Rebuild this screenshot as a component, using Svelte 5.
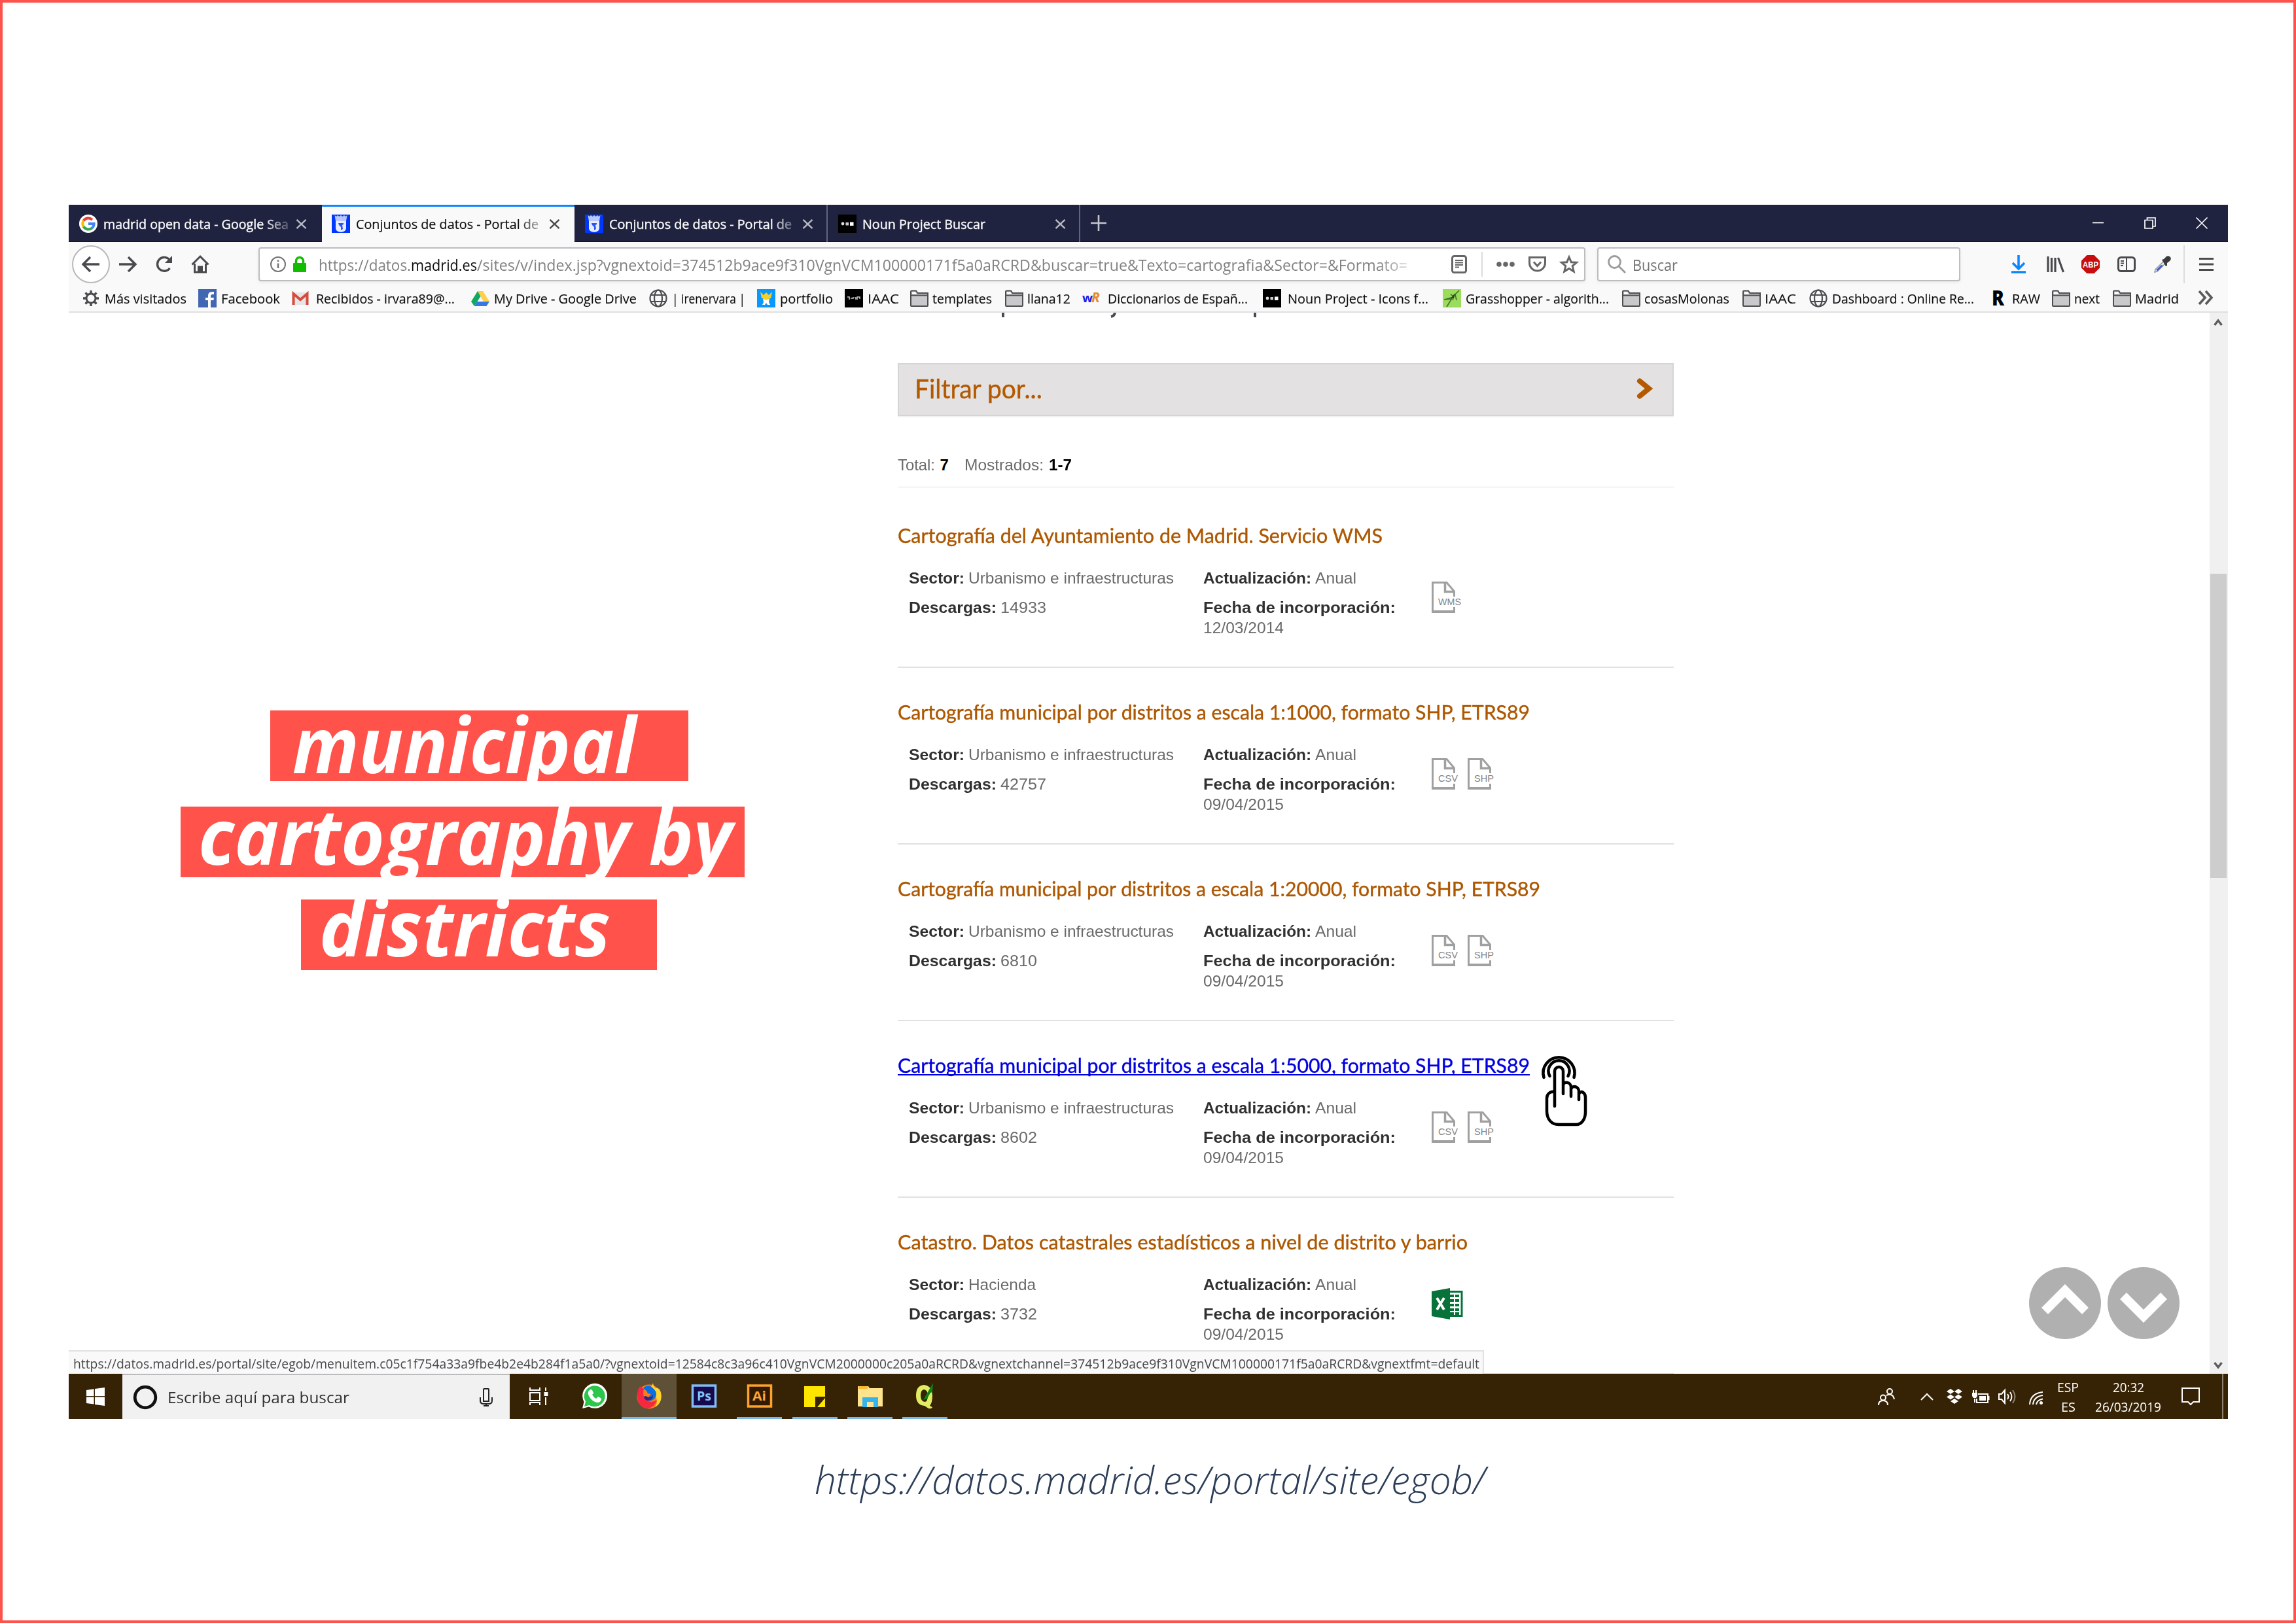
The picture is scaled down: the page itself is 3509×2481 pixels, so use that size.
<script>
  // Stretches a label horizontally so that it takes exactly `width` pixels.
  function fit(node, width) {
    const natural = node.getBoundingClientRect().width;
    node.style.transform = `scaleX(${width / natural})`;
    node.style.marginRight = `${width - natural}px`;
  }

  const headline = [
    { text: 'municipal', width: 525, cls: 'one' },
    { text: 'cartography by', width: 816, cls: 'two' },
    { text: 'districts', width: 445, cls: 'three' }
  ];

  const tabs = [
    { label: 'madrid open data - Google Sea', icon: 'google', width: 283, fade: true },
    { label: 'Conjuntos de datos - Portal de', icon: 'madrid', width: 279, active: true, fade: true },
    { label: 'Conjuntos de datos - Portal de', icon: 'madrid', width: 279, fade: true },
    { label: 'Noun Project Buscar', icon: 'noun', width: 188 }
  ];

  const bookmarks = [
    { icon: 'gear', label: 'Más visitados', span: 178, width: 125 },
    { icon: 'facebook', label: 'Facebook', span: 142, width: 90 },
    { icon: 'gmail', label: 'Recibidos - irvara89@...', span: 275, width: 212, wide: true },
    { icon: 'drive', label: 'My Drive - Google Drive', span: 272, width: 218 },
    { icon: 'globe', label: '| irenervara |', span: 165, width: 112 },
    { icon: 'wix', label: 'portfolio', span: 134, width: 81 },
    { icon: 'iaac', label: 'IAAC', span: 101, width: 48 },
    { icon: 'folder', label: 'templates', span: 145, width: 91 },
    { icon: 'folder', label: 'llana12', span: 118, width: 66 },
    { icon: 'wr', label: 'Diccionarios de Españ...', span: 275, width: 214, wide: true },
    { icon: 'noun', label: 'Noun Project - Icons f...', span: 275, width: 215, wide: true },
    { icon: 'grass', label: 'Grasshopper - algorith...', span: 275, width: 219 },
    { icon: 'folder', label: 'cosasMolonas', span: 184, width: 130 },
    { icon: 'folder', label: 'IAAC', span: 101, width: 48 },
    { icon: 'globe', label: 'Dashboard : Online Re...', span: 275, width: 217 },
    { icon: 'raw', label: 'RAW', span: 97, width: 43 },
    { icon: 'folder', label: 'next', span: 93, width: 39 },
    { icon: 'folder', label: 'Madrid', span: 127, width: 67 }
  ];

  const datasets = [
    { title: 'Cartografía del Ayuntamiento de Madrid. Servicio WMS', width: 741, sector: 'Urbanismo e infraestructuras', sw: 314, downloads: '14933', dw: 70, date: '12/03/2014', files: ['WMS'] },
    { title: 'Cartografía municipal por distritos a escala 1:1000, formato SHP, ETRS89', width: 966, sector: 'Urbanismo e infraestructuras', sw: 314, downloads: '42757', dw: 70, date: '09/04/2015', files: ['CSV', 'SHP'] },
    { title: 'Cartografía municipal por distritos a escala 1:20000, formato SHP, ETRS89', width: 982, sector: 'Urbanismo e infraestructuras', sw: 314, downloads: '6810', dw: 56, date: '09/04/2015', files: ['CSV', 'SHP'] },
    { title: 'Cartografía municipal por distritos a escala 1:5000, formato SHP, ETRS89', width: 966, sector: 'Urbanismo e infraestructuras', sw: 314, downloads: '8602', dw: 56, date: '09/04/2015', files: ['CSV', 'SHP'], hover: true },
    { title: 'Catastro. Datos catastrales estadísticos a nivel de distrito y barrio', width: 871, sector: 'Hacienda', sw: 103, downloads: '3732', dw: 56, date: '09/04/2015', files: ['XLS'] }
  ];

  const apps = ['taskview', 'whatsapp', 'firefox', 'ps', 'ai', 'sticky', 'explorer', 'qgis'];
  const running = ['ai', 'sticky', 'explorer', 'qgis'];
</script>

{#snippet favicon(name)}
  <svg class="fav" viewBox="0 0 28 28">
    {#if name === 'google'}
      <circle cx="14" cy="14" r="14" fill="#fff" />
      <g fill="none" stroke-width="4">
        <path d="M6.6 9.5A8.6 8.6 0 0 1 20 8" stroke="#ea4335" />
        <path d="M6.6 18.3a8.6 8.6 0 0 1 0-8.8" stroke="#fbbc05" />
        <path d="M19.8 20.4A8.6 8.6 0 0 1 6.6 18.3" stroke="#34a853" />
        <path d="M14 14h8.6a8.6 8.6 0 0 1-2.9 6.5" stroke="#4285f4" />
      </g>
    {:else if name === 'madrid'}
      <rect width="28" height="28" fill="#0037ff" />
      <path d="M4.500 1l2.500 2 2-2 2.500 2L14 1l2.500 2L19 1l2 2 2.500-2-1.500 9H6z" fill="#b9c8ff" />
      <path d="M6 10h16v11q0 5-8 6-8-1-8-6z" fill="#e6ebff" />
      <path d="M10 13h8v2l-2 1 1 6-3 2 0-5-3-3z" fill="#2a55f5" />
    {:else if name === 'noun'}
      <rect width="28" height="28" fill="#000" />
      <circle cx="7" cy="14" r="2.4" fill="#ddd" />
      <rect x="11.5" y="12" width="4.5" height="4.5" fill="#ccc" />
      <rect x="18" y="11.5" width="5.5" height="5.5" fill="#fff" />
    {:else if name === 'gear'}
      <g fill="none" stroke="#4a4a4d">
        <circle cx="14" cy="14" r="7" stroke-width="3" />
        <path d="M14 2v4M14 22v4M2 14h4M22 14h4M5.5 5.5l3 3M19.500 19.500l3 3M22.500 5.500l-3 3M8.500 19.500l-3 3" stroke-width="3.400" />
      </g>
    {:else if name === 'facebook'}
      <rect width="28" height="28" fill="#4267b2" />
      <path d="M15 28V17h-4v-4h4v-3q0-6 6-6h3v4h-2q-3 0-3 3v2h5l-.7 4H19v11z" fill="#fff" />
    {:else if name === 'gmail'}
      <rect x="2" y="5" width="24" height="19" fill="#e6e6e6" />
      <path d="M3.500 24V7L14 16 24.500 7v17" fill="none" stroke="#d54b3d" stroke-width="4" />
    {:else if name === 'drive'}
      <path d="M10 3h8l10 16h-9z" fill="#ffcf48" />
      <path d="M10 3l4.500 8L5 26 0 19z" fill="#11a861" />
      <path d="M9 19h19l-4.500 7H5z" fill="#3777e3" />
    {:else if name === 'globe'}
      <g fill="none" stroke="#4c4c50" stroke-width="2.200">
        <circle cx="14" cy="14" r="12.500" /><ellipse cx="14" cy="14" rx="6" ry="12.500" />
        <path d="M3 9h22M3 19h22" />
      </g>
    {:else if name === 'wix'}
      <rect width="28" height="28" fill="#0a98ff" />
      <path d="M5 4l5 5 4-4 4 4 5-5-2 10H7z" fill="#f7d021" />
      <circle cx="14" cy="14" r="4" fill="#f7d021" />
      <path d="M9 14q5 5 10 0l-1 6 2 4h-4l-2-3-2 3H8l2-4z" fill="#fff" />
    {:else if name === 'iaac'}
      <rect width="28" height="28" fill="#000" />
      <path d="M4 12h3v4M9 14h4v-2M15 13h2v3M19 16v-4h4v3" fill="none" stroke="#ccc" stroke-width="1.500" />
    {:else if name === 'folder'}
      <path d="M1 25V4q0-1.500 1.500-1.500H9L11.500 6H27v19q0 1-1 1H2q-1 0-1-1z" fill="#c9c9cc" stroke="#4d4d50" stroke-width="2" />
      <path d="M1 9.500h26" stroke="#4d4d50" stroke-width="2" /><path d="M3 4.500h5l2 3H3z" fill="#fff" />
    {:else if name === 'wr'}
      <text x="-1" y="20" font-size="18" font-weight="700" textLength="16" lengthAdjust="spacingAndGlyphs" fill="#1d1dea">w</text>
      <text x="13" y="20" font-size="21" font-weight="700" font-style="italic" fill="#e68a2e">R</text>
    {:else if name === 'grass'}
      <rect width="28" height="28" fill="#9bdc5c" />
      <path d="M25 2L12 15M12 8l5 3-2 6M19 8l2 9M14 14L6 27M13 13L2 16M12 15l-8 1" fill="none" stroke="#42702a" stroke-width="1.600" />
      <path d="M19 6l-8 9 6-2z" fill="#234315" />
    {:else if name === 'raw'}
      <text x="4" y="25" font-size="31" font-weight="800" textLength="19" lengthAdjust="spacingAndGlyphs" fill="#000">R</text>
    {/if}
  </svg>
{/snippet}

{#snippet fileIcon(kind)}
  {#if kind === 'XLS'}
    <svg class="file" viewBox="0 0 48 48">
      <rect x="24" y="5.500" width="22" height="37" fill="#fff" stroke="#07723a" stroke-width="3" />
      <path d="M28 12h16M28 19h16M28 26h16M28 33h16M28 39h16" stroke="#07723a" stroke-width="4" stroke-dasharray="6 2" />
      <path d="M0 5L28 0v48L0 43z" fill="#07723a" />
      <path d="M8 15l11 18M19 15L8 33" stroke="#fff" stroke-width="4" />
    </svg>
  {:else}
    <svg class="file" viewBox="0 0 48 48">
      <path d="M1.500 1.500H23L34.500 15v8M34.500 39v7" fill="none" stroke="#a0a0a0" stroke-width="3" />
      <path d="M1.500 0v48" stroke="#a0a0a0" stroke-width="3" /><path d="M0 46h36" stroke="#a0a0a0" stroke-width="4" />
      <path d="M20.500 2v13.500H35" fill="none" stroke="#a0a0a0" stroke-width="3.500" />
      <text x="10" y="36" font-size="15.500" textLength={kind === 'WMS' ? 35 : 30} lengthAdjust="spacingAndGlyphs" fill="#858585">{kind}</text>
    </svg>
  {/if}
{/snippet}

{#snippet closeX()}
  <svg class="close" viewBox="0 0 18 16"><path d="M1.500 1l15 14M16.500 1l-15 14" /></svg>
{/snippet}

<div class="page">
  <div class="browser">
    <div class="tabbar">
      {#each tabs as tab}
        <div class="tab" class:active={tab.active}>
          {@render favicon(tab.icon)}
          <div class="tablabel" class:fade={tab.fade}><span class="fit" use:fit={tab.width}>{tab.label}</span></div>
          {@render closeX()}
        </div>
      {/each}
      <svg class="plus" viewBox="0 0 24 24"><path d="M12 0v24M0 12h24" /></svg>
      <div class="winbuttons">
        <svg viewBox="0 0 18 18"><path d="M0 8.500h17" /></svg>
        <svg viewBox="0 0 18 18"><path d="M1 4.500h12V17H1zM4.500 4V1H17v13h-3.500" /></svg>
        <svg viewBox="0 0 18 18"><path d="M.5.500l17 17M17.500.500l-17 17" /></svg>
      </div>
    </div>

    <div class="toolbar">
      <div class="nav">
        <div class="back"><svg width="28" height="26" viewBox="0 0 28 26"><path d="M27 13H2M13 2L2 13l11 11" /></svg></div>
        <svg class="forward" width="28" height="26" viewBox="0 0 28 26"><path d="M1 13h25M15 2l11 11-11 11" /></svg>
        <svg class="reload" width="28" height="28" viewBox="0 0 28 28"><path d="M22.500 20A10.500 10.500 0 1 1 22 7" /><path d="M26 1v11H15l4-4z" fill="#4a4a4d" stroke="none" /></svg>
        <svg class="home" width="28" height="28" viewBox="0 0 28 28"><path d="M1.500 14.500L14 2l12.500 12.500M5.500 13v13h17V13" /><path d="M11.500 26v-8h5v8" fill="#4a4a4d" /></svg>
      </div>
      <div class="urlbar">
        <svg class="info" width="24" height="24" viewBox="0 0 24 24"><circle cx="12" cy="12" r="11" fill="none" stroke="#737373" stroke-width="2" /><path d="M12 10.500V18M12 5.500v2.500" stroke="#737373" stroke-width="2.500" /></svg>
        <svg class="lock" width="20" height="24" viewBox="0 0 20 24"><path d="M4.500 11V7a5.500 5.500 0 0 1 11 0v4" fill="none" stroke="#12bc00" stroke-width="3.500" /><rect y="10" width="20" height="14" rx="1" fill="#12bc00" /></svg>
        <div class="url"><span class="fit" use:fit={141}>https://datos.</span><span class="fit host" use:fit={101}>madrid.es</span><span class="fit" use:fit={1422}>/sites/v/index.jsp?vgnextoid=374512b9ace9f310VgnVCM100000171f5a0aRCRD&amp;buscar=true&amp;Texto=cartografia&amp;Sector=&amp;Formato=</span></div>
        <svg class="reader" width="24" height="28" viewBox="0 0 24 28"><rect x="1.500" y="1.500" width="21" height="25" rx="3" fill="none" stroke="#666" stroke-width="3" /><path d="M6 8h12M6 11.500h12M6 15h12M6 18.500h6" stroke="#666" stroke-width="1.800" /></svg>
        <i class="sep"></i>
        <svg class="dots" width="28" height="8" viewBox="0 0 28 8"><circle cx="4" cy="4" r="3.800" /><circle cx="14" cy="4" r="3.800" /><circle cx="24" cy="4" r="3.800" /></svg>
        <svg class="pocket" width="27" height="24" viewBox="0 0 27 24"><path d="M1.500 1.500h24V10a12 12 0 0 1-24 0zM8 8.500l5.500 6 5.500-6" /></svg>
        <svg class="star" width="28" height="28" viewBox="0 0 28 28"><path d="M14 3l3.300 7.700 8.200.600-6.300 5.300 2 8.400L14 20.500 6.800 25l2-8.400-6.300-5.300 8.200-.600z" /></svg>
      </div>
      <div class="search">
        <svg width="28" height="28" viewBox="0 0 28 28"><circle cx="10.500" cy="10.500" r="9" /><path d="M17 17l10 10" /></svg>
        <span class="fit" use:fit={69}>Buscar</span>
      </div>
      <div class="tools">
        <svg class="t1" width="22" height="28" viewBox="0 0 22 28"><path d="M11 0v21M2 12l9 9 9-9M0 26h22" fill="none" stroke="#0a84ff" stroke-width="3.500" /></svg>
        <svg class="t2" width="27" height="24" viewBox="0 0 27 24"><path d="M2 0v24M7.500 2v22M13 2v22M17.500 2l8 22" fill="none" stroke="#4a4a4d" stroke-width="3.200" /></svg>
        <svg class="t3" width="28" height="28" viewBox="0 0 28 28"><path d="M8.500 0h11L28 8.500v11L19.500 28h-11L0 19.500v-11z" fill="#c70d0d" /><text x="2" y="18.500" font-size="12.500" font-weight="700" textLength="24" lengthAdjust="spacingAndGlyphs" fill="#fff">ABP</text></svg>
        <svg class="t4" width="28" height="24" viewBox="0 0 28 24"><rect x="1.500" y="1.500" width="25" height="21" rx="4" fill="none" stroke="#4a4a4d" stroke-width="3" /><path d="M14 2v20M5 7h5M5 10.500h5M5 14h4" stroke="#4a4a4d" stroke-width="2" /></svg>
        <svg class="t5" width="27" height="27" viewBox="0 0 27 27"><path d="M2 25l1-4L16 8l3 3L6 24z" fill="#dfe6f5" stroke="#999" stroke-width="1.500" /><path d="M4 22l8-8 3 1-8 8z" fill="#3d5be0" /><path d="M13 6l3-1 4-4q3-2 6 1 2 3-1 6l-4 3 0 4-2 1z" fill="#3b3b3d" /></svg>
        <i class="sep tall"></i>
        <svg class="t6" width="22" height="22" viewBox="0 0 22 22"><path d="M0 2.500h22M0 11h22M0 19.500h22" stroke="#4a4a4d" stroke-width="3" /></svg>
      </div>
    </div>

    <div class="bookmarks">
      {#each bookmarks as b}
        <div class="bookmark" class:wide={b.wide} class:near={b.icon === 'folder'} style="width: {b.span}px">
          {@render favicon(b.icon)}<span class="fit" use:fit={b.width}>{b.label}</span>
        </div>
      {/each}
      <svg class="more" width="24" height="22" viewBox="0 0 24 22"><path d="M2 1l9 10-9 10M12 1l9 10-9 10" /></svg>
    </div>

    <div class="content">
      <div class="headline">
        {#each headline as line}
          <div class="line {line.cls}"><span class="fit" use:fit={line.width}>{line.text}</span></div>
        {/each}
      </div>

      <main>
        <svg class="clipped" viewBox="0 0 1187 8"><path d="M161 0v7M546 0v7" stroke="#444b55" stroke-width="4" /><path d="M332 0q-1 5-6 6" fill="none" stroke="#444b55" stroke-width="4" /></svg>
        <div class="filter">
          <span class="fit" use:fit={195}>Filtrar por...</span>
          <svg width="26" height="30" viewBox="0 0 26 30"><path d="M4 3.500L18 15 4 26.500" /></svg>
        </div>
        <div class="totals">
          <span class="fit" use:fit={57}>Total:</span><b>7</b>
          <span class="fit shown" use:fit={121}>Mostrados:</span><b><span class="fit" use:fit={35}>1-7</span></b>
        </div>
        {#each datasets as d}
          <article>
            <h2 class:hover={d.hover}><span class="fit" use:fit={d.width}>{d.title}</span></h2>
            <div class="details">
              <div class="col">
                <p><b class="fit" use:fit={85}>Sector:</b><span class="fit" use:fit={d.sw}>{d.sector}</span></p>
                <p><b class="fit" use:fit={134}>Descargas:</b><span class="fit" use:fit={d.dw}>{d.downloads}</span></p>
              </div>
              <div class="col second">
                <p><b class="fit" use:fit={165}>Actualización:</b><span class="fit" use:fit={63}>Anual</span></p>
                <p><b class="fit" use:fit={294}>Fecha de incorporación:</b></p>
                <p class="date"><span class="fit" use:fit={123}>{d.date}</span></p>
              </div>
              <div class="files">{#each d.files as f}{@render fileIcon(f)}{/each}</div>
            </div>
            {#if d.hover}
              <svg class="hand" viewBox="0 0 69 110">
                <path d="M20 79V25.500a6.500 6.500 0 0 1 13 0V60V47C34 40 45 42 45 50V64V53C47 46 57 49 57 56V69V60C60 54 67 58 67 66V88C67 99 61 107 53 107H26C15 107 8 99 8 86V67C8 60 13 56.500 20 56.500z" fill="#fff" stroke="none" />
                <path d="M20 79V25.500a6.500 6.500 0 0 1 13 0V60M33 47C34 40 45 42 45 50V64M45 53C47 46 57 49 57 56V69M57 60C60 54 67 58 67 66V88C67 99 61 107 53 107H26C15 107 8 99 8 86V67C8 60 13 56.500 20 56.500" />
                <path d="M3.500 35A24 24 0 1 1 49.500 35M12.500 33A16 16 0 1 1 40.500 33" />
              </svg>
            {/if}
          </article>
        {/each}
      </main>

      <div class="scrollbar">
        <svg width="14" height="12" viewBox="0 0 14 12"><path d="M1.500 10L7 3l5.500 7" /></svg>
        <div class="thumb"></div>
        <svg width="14" height="12" viewBox="0 0 14 12"><path d="M1.500 2L7 9l5.500-7" /></svg>
      </div>

      <div class="jump">
        <svg viewBox="0 0 110 110"><circle cx="55" cy="55" r="55" /><path d="M24 67L55 36 86 67" /></svg>
        <svg viewBox="0 0 110 110"><circle cx="55" cy="55" r="55" /><path d="M24 44L55 75 86 44" /></svg>
      </div>

      <div class="status"><span class="fit" use:fit={2149}>https://datos.madrid.es/portal/site/egob/menuitem.c05c1f754a33a9fbe4b2e4b284f1a5a0/?vgnextoid=12584c8c3a96c410VgnVCM2000000c205a0aRCRD&amp;vgnextchannel=374512b9ace9f310VgnVCM100000171f5a0aRCRD&amp;vgnextfmt=default</span></div>
    </div>

    <div class="taskbar">
      <div class="start"><svg width="28" height="28" viewBox="0 0 28 28"><path d="M0 4l11.500-1.700V13H0zM13 2l15-2v13H13zM0 14.500h11.500v11L0 24zM13 14.500h15V28l-15-2z" fill="#fff" /></svg></div>
      <div class="cortana">
        <svg width="38" height="38" viewBox="0 0 38 38"><circle cx="19" cy="19" r="15.800" fill="none" stroke="#111" stroke-width="4.800" /></svg>
        <span class="fit" use:fit={278}>Escribe aquí para buscar</span>
        <svg class="mic" width="20" height="28" viewBox="0 0 20 28"><path d="M6 2q0-1 1-1h6q1 0 1 1v18H6zM1 14v5q0 5 5 5h8q5 0 5-5v-5M10 24v4M6 27h8" fill="none" stroke="#222" stroke-width="2" /></svg>
      </div>
      <div class="apps">
        {#each apps as app}
          <div class="app" class:current={app === 'firefox'} class:running={running.includes(app)}>
            <svg width="40" height="40" viewBox="0 0 40 40">
              {#if app === 'taskview'}
                <path d="M7 7v4h15V7M7 34v-4h15v4M7 15h15v12H7zM31 7v5M31 22v12" fill="none" stroke="#fff" stroke-width="2" /><rect x="28.500" y="14" width="6" height="6" fill="#fff" />
              {:else if app === 'whatsapp'}
                <path d="M2 39l2.500-10A19 19 0 1 1 12 36.500z" fill="#fff" />
                <path d="M5 36l2-7.500A16 16 0 1 1 12.500 34z" fill="#2bc64b" />
                <path d="M13 11q2-2 4 0l2 4q0 2-2 3 2 4 6 6l3-3q5 2 5 4-1 5-6 5-8-1-13-10-3-6 1-9z" fill="#fff" />
              {:else if app === 'firefox'}
                <circle cx="20" cy="21" r="18.500" fill="#ff7a19" />
                <path d="M2 20Q2 8 7 5q2 3 5 4Q9 19 15 26q8 6 17 0-4 12-15 13Q2 36 2 20z" fill="#f5283f" />
                <path d="M26 0q0 4 4 8 3-1 6 2 4 7 2 16-2 7-9 11 6-10 0-18-7-5-6-12z" fill="#ffd52e" />
                <path d="M11 8Q19 0 27 9q7 7 2 14-6 7-13 3-4-3-3-6l6 2 4-5-5-1-2-4z" fill="#0a6fe0" />
                <path d="M15 20q7 5 11-2 0 8-7 9-6 0-7-6z" fill="#362482" />
              {:else if app === 'ps'}
                <rect x="2.500" y="4" width="35" height="32" fill="#150a4d" stroke="#80bdf7" stroke-width="3.500" />
                <text x="9" y="27" font-size="20" font-weight="700" textLength="22" lengthAdjust="spacingAndGlyphs" fill="#86c5f8">Ps</text>
              {:else if app === 'ai'}
                <rect x="2.500" y="4" width="35" height="32" fill="#321900" stroke="#fba32c" stroke-width="3.500" />
                <text x="9" y="27" font-size="20" font-weight="700" textLength="21" lengthAdjust="spacingAndGlyphs" fill="#fba63a">Ai</text>
              {:else if app === 'sticky'}
                <path d="M4 5h32v16H21v16H4z" fill="#ffe600" /><path d="M36 23v14H24z" fill="#ffe600" />
              {:else if app === 'explorer'}
                <path d="M1 5h16l2 3h20v28H1z" fill="#ffe38d" /><path d="M2 5h14v4H2z" fill="#fdb931" />
                <path d="M8 22h24v15H8z" fill="#36b2ec" /><path d="M15 29h10v8H15z" fill="#ffe38d" />
              {:else}
                <path d="M18 3Q6 4 6 19t13 16l6 4q5 1 6-2l-4-2q4-5 4-16Q30 4 18 3zm0 7q6 1 6 9 0 10-5 10-6-1-6-10 0-8 5-9z" fill="#e1ec62" />
                <path d="M32 0L17 26l6-2 5-9 3-1z" fill="#0c8517" />
              {/if}
            </svg>
          </div>
        {/each}
      </div>
      <div class="tray">
        <svg class="people" width="26" height="26" viewBox="0 0 26 26"><circle cx="18" cy="5" r="4" /><circle cx="8" cy="14.500" r="4" /><path d="M1 26q0-7 7-7t7 7M13 11q10-4 12 6" /></svg>
        <svg class="caret" width="20" height="12" viewBox="0 0 20 12"><path d="M1 11l9-9 9 9" /></svg>
        <svg class="dropbox" width="26" height="24" viewBox="0 0 26 24"><path d="M7 0l6 4-6 4-6-4zM19 0l6 4-6 4-6-4zM7 8.500l6 4-6 4-6-4zM19 8.500l6 4-6 4-6-4zM13 15l6 4-6 4-6-4z" fill="#fff" stroke="none" /></svg>
        <svg class="battery" width="28" height="20" viewBox="0 0 28 20"><path d="M9 6h15v13H7v-6M25.500 9v6M4 13v6M2 0v4M6 0v4" /><path d="M11 9h10v7H11zM0 4h8v5l-2 3H2L0 9z" fill="#fff" stroke="none" /></svg>
        <svg class="volume" width="28" height="22" viewBox="0 0 28 22"><path d="M1 7h4l5-6v20l-5-6H1zM14 7q3 4 0 8M18 4q5 7 0 14" /><path d="M22 1q7 10 0 20" opacity=".45" /></svg>
        <svg class="wifi" width="22" height="22" viewBox="0 0 22 22"><path d="M1 21Q2 4 21 2M6 21Q7 9 21 7M11 21q1-7 10-8.500" /><circle cx="18.500" cy="18.500" r="2.500" fill="#fff" stroke="none" /></svg>
        <div class="two-line lang"><span class="fit" use:fit={33}>ESP</span><span class="fit" use:fit={22}>ES</span></div>
        <div class="two-line clock"><span class="fit" use:fit={48}>20:32</span><span class="fit" use:fit={101}>26/03/2019</span></div>
        <svg class="notice" width="28" height="28" viewBox="0 0 28 28"><path d="M1 1h26v21h-9l-4 4-4-4H1z" /></svg>
        <i class="desktop"></i>
      </div>
    </div>
  </div>

  <footer><span class="fit" use:fit={1025}>https://datos.madrid.es/portal/site/egob/</span></footer>
</div>

<style>
  :global(body) { margin: 0; background: #fff; }
  .page {
    box-sizing: border-box; width: 3509px; height: 2481px; border: 4px solid #ff524b; background: #fff;
    padding: 309px 100px 0 101px; font-family: "Open Sans", "Noto Sans", sans-serif; font-size: 20.600px; overflow: hidden;
  }
  svg { display: block; flex: none; overflow: visible; }
  .fit { display: inline-block; white-space: pre; transform-origin: 0 50%; flex: none; }
  .browser { width: 3300px; height: 1856px; display: flex; flex-direction: column; }
  .fav { width: 28px; height: 28px; }

  .tabbar { height: 57px; background: #202340; box-shadow: inset 0 -2px #16162b; display: flex; color: #f9f9fa; flex: none; }
  .tab { box-sizing: border-box; width: 386.500px; display: flex; align-items: center; padding: 1px 23px 0 16px; -webkit-text-stroke: .4px currentColor; }
  .tab + .tab + .tab { border-right: 2px solid #63657a; padding-right: 20px; }
  .tab.active { background: #f9f9fa; box-shadow: inset 0 3px #0a84ff; color: #0c0c0d; padding: 1px 22px 0 15px; -webkit-text-stroke: .2px currentColor; }
  .tablabel { margin-left: 9px; flex: 1; height: 38px; line-height: 39px; overflow: hidden; }
  .fade { mask-image: linear-gradient(90deg, #000 84%, transparent 100%); }
  .close { width: 17px; height: 15px; fill: none; stroke: #b9bac4; stroke-width: 2.600; }
  .active .close { stroke: #4a4a4d; }
  .plus { width: 24px; height: 24px; margin: 16px 0 0 16px; stroke: #c4c5cd; stroke-width: 2.600; }
  .winbuttons { margin-left: auto; margin-right: 31px; display: flex; gap: 61px; padding-top: 19px; }
  .winbuttons svg { width: 18px; height: 18px; fill: none; stroke: #fff; stroke-width: 1.700; }

  .toolbar { height: 68px; background: #f9f9fa; display: flex; align-items: center; flex: none; }
  .nav { width: 290px; display: flex; align-items: center; fill: none; stroke: #4a4a4d; stroke-width: 3.400; }
  .back { box-sizing: border-box; width: 58px; height: 58px; border: 2px solid #b9b9bb; border-radius: 50%; background: #fff; margin-left: 5px; display: flex; align-items: center; justify-content: center; }
  .forward { margin-left: 13px; }
  .reload, .home { margin-left: 28px; }
  .home { margin-left: 27px; stroke-width: 3; }
  .urlbar, .search { box-sizing: border-box; height: 52px; border: 2px solid #bdbdbf; border-radius: 4px; background: #fff; display: flex; align-items: center; box-shadow: 0 2px 5px #0001; }
  .urlbar { width: 2028px; padding-left: 16px; }
  .lock { margin-left: 11px; }
  .url { font-size: 24px; height: 46px; line-height: 48px; color: #828282; margin-left: 19px; width: 1667px; white-space: nowrap; display: flex; mask-image: linear-gradient(90deg, #000 97%, #0005); }
  .host { color: #0c0c0d; }
  .reader { margin-left: 64px; }
  .sep { width: 2px; height: 38px; background: #dcdcdc; margin-left: 22px; }
  .dots { margin-left: 21px; fill: #666; }
  .pocket, .star { fill: none; stroke: #666; stroke-width: 3; }
  .pocket { margin-left: 21px; }
  .star { margin-left: 21px; }
  .search { width: 555px; margin-left: 18px; padding-left: 14px; font-size: 24px; color: #747474; gap: 10px; }
  .search .fit { line-height: 46px; margin-top: 2px; }
  .search svg { fill: none; stroke: #9b9b9b; stroke-width: 2.800; }
  .tools { display: flex; align-items: center; font-family: "Liberation Sans", sans-serif; }
  .t1 { margin-left: 78px; }
  .t2 { margin-left: 32px; }
  .t3 { margin-left: 26px; }
  .t4, .t5 { margin-left: 27px; }
  .tall { height: 58px; margin-left: 19px; }
  .t6 { margin-left: 22px; }

  .bookmarks { box-sizing: border-box; height: 40px; padding: 0 0 0 20px; background: #f9f9fa; border-bottom: 2px solid #e0e0e1; display: flex; color: #0c0c0d; flex: none; -webkit-text-stroke: .15px currentColor; }
  .bookmark { display: flex; align-items: center; gap: 7px; flex: none; line-height: 34px; height: 35px; }
  .bookmark.wide { gap: 10px; }
  .bookmark.near { gap: 5px; }
  .bookmark.near .fav { margin-left: -1px; margin-right: 1px; }
  .more { margin-top: 6px; margin-left: 2px; fill: none; stroke: #5a5a5c; stroke-width: 3.600; }

  .content { position: relative; flex: 1; min-height: 0; display: flex; background: #fff; overflow: hidden; }
  .headline { width: 1266.500px; flex: none; padding-top: 608px; box-sizing: border-box; font-size: 118px; font-weight: 700; font-style: italic; color: #fff; }
  .line { display: flex; align-items: flex-start; height: 107.500px; background: #ff524b; box-sizing: border-box; }
  .one { width: 639px; margin-left: 308px; padding-left: 34px; line-height: 102px; }
  .two { width: 862px; margin: 39.500px 0 0 171px; padding-left: 27px; line-height: 88px; }
  .three { width: 544px; margin: 34.500px 0 0 355px; padding-left: 28px; line-height: 84px; }

  main { width: 1186px; font-family: "Liberation Sans", Arial, sans-serif; font-size: 24px; line-height: 31px; color: #6a6a6a; }
  .clipped { width: 1187px; height: 8px; }
  .filter { box-sizing: border-box; height: 81px; margin-top: 69px; border: 2px solid #d5d5d5; background: #e3e1e1; display: flex; align-items: center; justify-content: space-between; padding: 0 28px 3px 24px; color: #b35900; font: 41px/72px Lato, sans-serif; box-shadow: 0 2px #f1f1f1; -webkit-text-stroke: .4px #b35900; }
  .filter svg { fill: none; stroke: #b35900; stroke-width: 8; stroke-linecap: round; }
  .totals { box-sizing: border-box; height: 108.500px; padding-top: 59px; border-bottom: 1.500px solid #dedede; display: flex; margin-bottom: 6px; }
  .totals b { color: #000; margin-left: 8px; }
  .totals .shown { margin-left: 24px; }
  article { position: relative; box-sizing: border-box; height: 270px; padding-top: 47px; border-bottom: 2px solid #e1e1e1; }
  h2 { margin: 0 0 30px; height: 40px; font: 31px/40px Lato, sans-serif; color: #ad5700; -webkit-text-stroke: .4px currentColor; }
  h2.hover { color: #0000e0; }
  h2.hover .fit { text-decoration: underline; text-decoration-thickness: 2px; text-underline-offset: 2px; text-decoration-skip-ink: none; }
  .details { display: flex; padding-left: 17px; }
  .col { width: 450px; flex: none; }
  .second { width: 349px; }
  p { margin: 0 0 14px; display: flex; gap: 6px; height: 31px; }
  p b { color: #303030; }
  p.date { margin-top: -14px; }
  .files { display: flex; gap: 7px; padding-top: 21px; }
  .file { width: 48px; height: 48px; }
  .hand { position: absolute; left: 984px; top: 51px; width: 69px; height: 110px; fill: none; stroke: #000; stroke-width: 4.500; stroke-linecap: round; stroke-linejoin: round; }

  .scrollbar { width: 28px; margin-left: auto; background: #f0f0f0; display: flex; flex-direction: column; align-items: center; padding: 9px 2px 7px 0; box-sizing: border-box; }
  .scrollbar svg { fill: none; stroke: #5c5c5c; stroke-width: 3.400; }
  .thumb { width: 25px; height: 465px; margin: 378px 0 auto; background: #cdcdcd; }
  .jump { position: absolute; right: 74.500px; bottom: 53px; display: flex; gap: 10px; }
  .jump svg { width: 110px; height: 110px; }
  .jump circle { fill: #b0b0b0; }
  .jump path { fill: none; stroke: #fff; stroke-width: 14; }
  .status { position: absolute; left: 0; bottom: 0; box-sizing: border-box; width: 2163px; height: 36px; padding-left: 7px; line-height: 37px; background: #f9f9fa; border: solid #e1e1e1; border-width: 2px 2px 0 0; color: #47474b; }

  .taskbar { height: 69px; background: #362205; display: flex; color: #fff; flex: none; }
  .start { width: 82px; display: flex; align-items: center; justify-content: center; }
  .cortana { box-sizing: border-box; width: 592px; background: #f1f1f1; border-top: 2px solid #bcbcbc; display: flex; align-items: center; padding-left: 16px; color: #303030; font-size: 24px; }
  .cortana .fit { margin-left: 15px; }
  .mic { margin-left: auto; margin-right: 26px; }
  .apps { display: flex; padding-left: 2px; }
  .app { box-sizing: border-box; width: 84.400px; display: flex; align-items: center; justify-content: center; padding-bottom: 1px; }
  .app.current { background: #5f5137; box-shadow: inset 0 -3px #76b9ed; }
  .app.running { background: linear-gradient(#76b9ed, #76b9ed) 50% 100% / 69px 3px no-repeat; }
  .tray { margin-left: auto; display: flex; align-items: center; fill: none; stroke: #fff; stroke-width: 2; }
  .people { margin-right: 39px; }
  .caret { margin-right: 19px; }
  .dropbox { margin-right: 14px; }
  .battery { margin-right: 12px; }
  .volume { margin-right: 19px; }
  .wifi { margin-top: 4px; }
  .two-line { display: flex; flex-direction: column; align-items: center; line-height: 30px; }
  .lang { width: 75px; }
  .clock { width: 109px; }
  .notice { margin-left: 27px; }
  .desktop { width: 2px; height: 69px; background: #8c8170; margin: 0 7px 0 34px; }

  footer { height: 90px; margin-top: 54px; padding-left: 1140px; font-size: 59px; line-height: 76px; font-weight: 300; font-style: italic; color: #2c3e57; }
</style>
